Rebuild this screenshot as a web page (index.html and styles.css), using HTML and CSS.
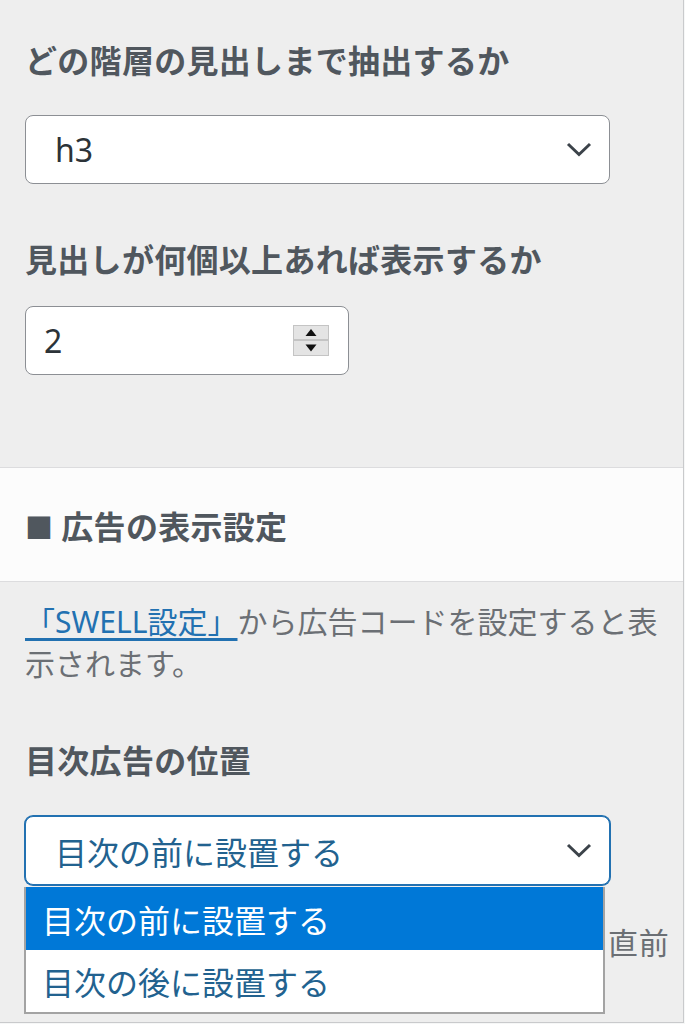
FILE: index.html
```html
<!DOCTYPE html>
<html lang="ja">

<head>
    <meta charset="utf-8">
    <meta name="viewport" content="width=device-width, initial-scale=1.0">
    <title>目次の設定</title>

    <link rel="stylesheet" href="styles.css">
</head>

<body>

    <div class="panel">

        <section class="group group-top">
            <label class="label">どの階層の見出しまで抽出するか</label>
            <div class="select">
                <span>h3</span>
                <svg class="chevron" width="26" height="15" viewBox="0 0 26 15">
                    <polyline points="2,2 13,12.5 24,2" fill="none" stroke="#3c434a" stroke-width="3" />
                </svg>
            </div>

            <label class="label second">見出しが何個以上あれば表示するか</label>
            <div class="number">
                <span>2</span>
                <svg class="spin" width="36" height="31" viewBox="0 0 36 31">
                    <rect x="0.5" y="0.5" width="35" height="14" fill="#e4e4e4" stroke="#c4c4c4" />
                    <rect x="0.5" y="15.5" width="35" height="15" fill="#e4e4e4" stroke="#c4c4c4" />
                    <polygon points="12.5,11 23.5,11 18,4" fill="#111" />
                    <polygon points="12.5,19.5 23.5,19.5 18,26.5" fill="#111" />
                </svg>
            </div>
        </section>

        <h2 class="section-title"><span class="mark">■</span>広告の表示設定</h2>

        <section class="group group-bottom">
            <p class="note"><a href="#">「SWELL設定」</a>から広告コードを設定すると表示されます。</p>

            <label class="label second">目次広告の位置</label>
            <div class="select-wrap">
                <div class="select focus">
                    <span>目次の前に設置する</span>
                    <svg class="chevron" width="26" height="15" viewBox="0 0 26 15">
                        <polyline points="2,2 13,12.5 24,2" fill="none" stroke="#3c434a" stroke-width="3" />
                    </svg>
                </div>

                <!-- open list of the select -->
                <ul class="dropdown">
                    <li class="active">目次の前に設置する</li>
                    <li>目次の後に設置する</li>
                </ul>
            </div>

            <p class="note help">目次の前に設置すると、広告は必ず目次の直前に表示されます。</p>
        </section>

    </div>

</body>

</html>
```

FILE: styles.css
```css
* {
    box-sizing: border-box;
}

body {
    margin: 0;
    background-color: #f6f7f7;
    font-family: "Noto Sans", "Noto Sans CJK JP", sans-serif;
}

.panel {
    width: 684px;
    background-color: #eeeeee;
    border-right: 1px solid #c9cacc;
    border-bottom: 1px solid #c9cacc;
}

.group {
    padding: 0 12px 0 25px;
}

.group-top {
    padding-top: 41px;
    padding-bottom: 92px;
    border-bottom: 1px solid #dcdcde;
}

.group-bottom {
    padding-top: 19px;
    padding-bottom: 16px;
}

.label {
    display: block;
    font-size: 32px;
    line-height: 40px;
    font-weight: bold;
    color: #50575e;
    letter-spacing: 0.3px;
}

.label.second {
    margin-top: 56px;
}

.select {
    display: flex;
    align-items: center;
    justify-content: space-between;
    width: 585px;
    height: 69px;
    margin-top: 34px;
    padding: 0 17px 0 29px;
    background-color: #fff;
    border: 1px solid #8c8f94;
    border-radius: 8px;
    font-size: 32px;
    color: #2c3338;
}

.number {
    display: flex;
    align-items: center;
    justify-content: space-between;
    width: 324px;
    height: 69px;
    margin-top: 26px;
    padding: 0 19px 0 18px;
    background-color: #fff;
    border: 1px solid #8c8f94;
    border-radius: 8px;
    font-size: 32px;
    color: #2c3338;
}

.section-title {
    margin: 0;
    padding: 39px 25px 33px;
    background-color: #fcfcfc;
    border-bottom: 1px solid #dcdcde;
    font-size: 32px;
    line-height: 40px;
    font-weight: bold;
    color: #50575e;
    letter-spacing: 0.3px;
}

.mark {
    font-size: 28px;
    margin-right: 8px;
}

.note {
    margin: 0;
    font-size: 30px;
    line-height: 42px;
    color: #6b6f74;
}

.note a {
    color: #2271b1;
    text-underline-offset: 5px;
}

.select-wrap {
    position: relative;
    width: 585px;
    margin-top: 35px;
}

.select.focus {
    margin-top: 0;
    border-color: #2271b1;
    box-shadow: 0 0 0 1px #2271b1;
    color: #22628f;
}

.dropdown {
    position: absolute;
    top: 71px;
    left: -1px;
    width: 581px;
    margin: 0;
    padding: 0;
    list-style: none;
    background-color: #fff;
    border: 2px solid #a3a3a3;
    border-top: 0;
}

.dropdown li {
    display: flex;
    align-items: center;
    height: 63px;
    padding-left: 16px;
    font-size: 32px;
    color: #22628f;
}

.dropdown li + li {
    height: 62px;
}

.dropdown .active {
    background-color: #0078d7;
    color: #fff;
}

.help {
    margin-top: 37px;
    letter-spacing: 0.75px;
}
```
